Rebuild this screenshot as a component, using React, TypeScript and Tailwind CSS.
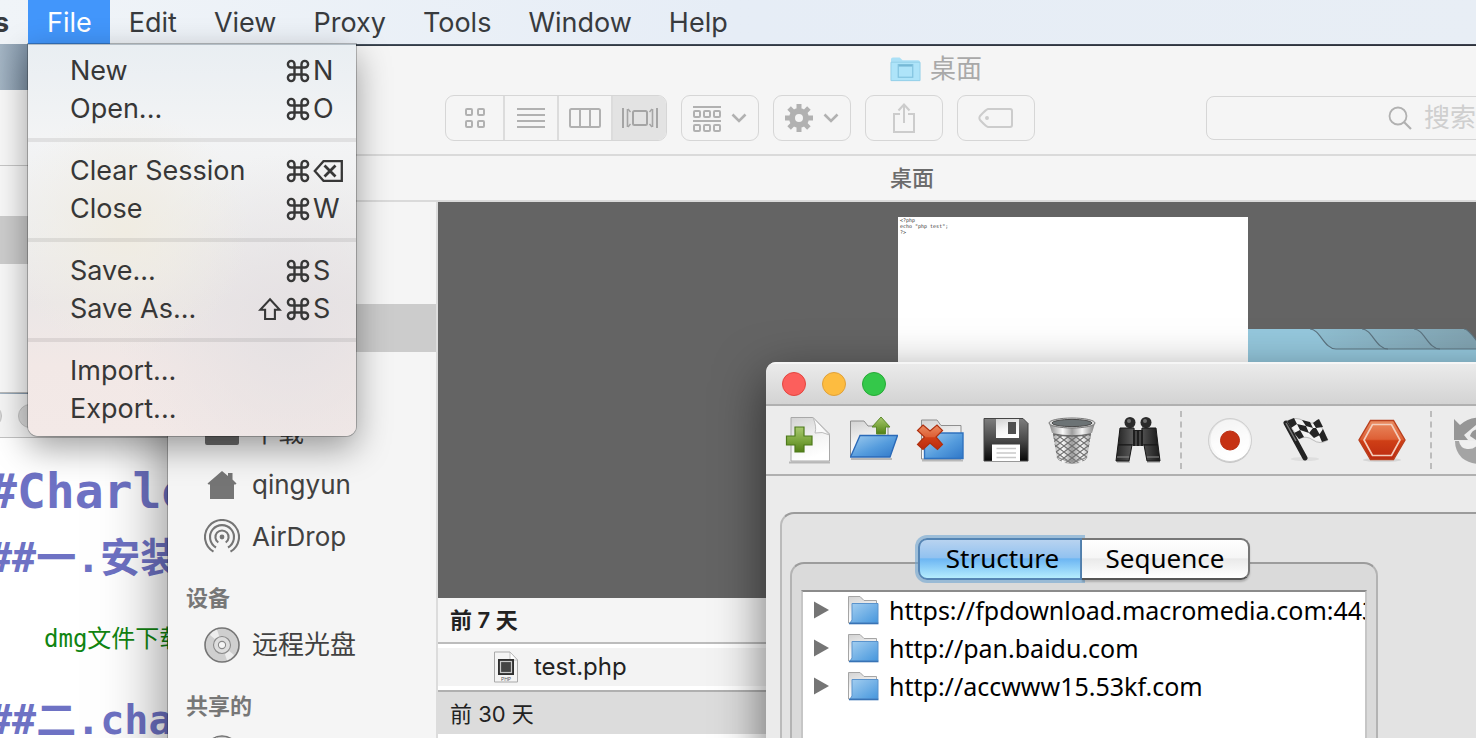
import type { ReactNode } from 'react';

type MenuEntry = { label: string; modifiers?: string; keyName?: string };

const menuTitles = ['File', 'Edit', 'View', 'Proxy', 'Tools', 'Window', 'Help'];

const menuGroups: MenuEntry[][] = [
  [
    { label: 'New', modifiers: '⌘', keyName: 'N' },
    { label: 'Open...', modifiers: '⌘', keyName: 'O' },
  ],
  [
    { label: 'Clear Session', modifiers: '⌘', keyName: '⌫' },
    { label: 'Close', modifiers: '⌘', keyName: 'W' },
  ],
  [
    { label: 'Save...', modifiers: '⌘', keyName: 'S' },
    { label: 'Save As...', modifiers: '⇧⌘', keyName: 'S' },
  ],
  [{ label: 'Import...' }, { label: 'Export...' }],
];

const hosts = [
  'https://fpdownload.macromedia.com:443',
  'http://pan.baidu.com',
  'http://accwww15.53kf.com',
];

/* ---------- menu bar ---------- */

function Glyph({ char }: { char: string }) {
  if (char === '⌘') {
    return (
      <svg role="img" aria-label="Command" className="h-6 w-6" viewBox="0 0 24 24" fill="none" stroke="currentColor" strokeWidth="2.4">
        <path d="M8.5 8.5V5.2A3.3 3.3 0 1 0 5.200 8.5H18.800A3.300 3.300 0 1 0 15.500 5.200V18.800A3.300 3.300 0 1 0 18.800 15.500H5.200A3.300 3.300 0 1 0 8.500 18.800Z" />
      </svg>
    );
  }
  if (char === '⇧') {
    return (
      <svg role="img" aria-label="Shift" className="h-6 w-6" viewBox="0 0 24 24" fill="none" stroke="currentColor" strokeWidth="2.1">
        <path d="M12 2.200L21.800 12.800H16.900V22H7.100V12.800H2.200Z" />
      </svg>
    );
  }
  if (char === '⌫') {
    return (
      <svg role="img" aria-label="Delete" className="h-6 w-[30px]" viewBox="0 0 30 24" fill="none" stroke="currentColor" strokeWidth="2.300">
        <path d="M10.500 2.200H28.800V21.800H10.500L1.800 12Z" />
        <path d="M11.500 6.500L22.500 17.500M22.500 6.500L11.500 17.500" strokeWidth="2.800" />
      </svg>
    );
  }
  return <span>{char}</span>;
}

function FileMenu() {
  return (
    <div
      role="menu"
      aria-label="File"
      className="absolute top-11 left-[28px] w-[328px] rounded-b-[10px] border-t border-t-[#b4bec6] bg-[radial-gradient(circle_at_30%_48%,#f0ece2_0%,transparent_40%),radial-gradient(circle_at_80%_72%,#e5e1e3_0%,transparent_45%),linear-gradient(to_bottom,#e9eef2_0%,#f3f4f5_24%,#eeeeee_50%,#ebe7e7_66%,#f2e8e6_82%,#f3e9e7_100%)] pt-[7px] pb-2 shadow-[0_0_0_1px_rgba(0,0,0,0.24),0_12px_34px_rgba(0,0,0,0.38)]"
    >
      {menuGroups.map((group, index) => (
        <div key={group[0].label} role="group">
          {index > 0 && <div role="separator" className="mt-[10px] mb-[10px] h-1 bg-black/8" />}
          {group.map((entry) => (
            <button
              key={entry.label}
              type="button"
              role="menuitem"
              className="flex h-[38px] w-full items-center pl-[42px] text-left text-[27px] leading-[38px] text-[#373737]"
            >
              <span className="flex-1">{entry.label}</span>
              <span className="flex items-center gap-1 pr-[3px]">
                {[...(entry.modifiers ?? '')].map((char) => (
                  <Glyph key={char} char={char} />
                ))}
              </span>
              <span className="flex w-[43px] items-center">{entry.keyName && <Glyph char={entry.keyName} />}</span>
            </button>
          ))}
        </div>
      ))}
    </div>
  );
}

function MenuBar() {
  return (
    <header className="absolute inset-x-0 top-0 z-30">
      <nav aria-label="Menu bar" className="flex h-11 items-stretch bg-linear-to-r from-[#f0f4f8] via-[#e6edf6] to-[#e8eef5] text-[27px] leading-[42px] text-[#383b3e]">
        <div className="flex w-[28px] shrink-0 justify-end overflow-hidden pt-0.5 pr-[19px] font-bold">s</div>
        {menuTitles.map((title) => (
          <button
            key={title}
            type="button"
            aria-haspopup="menu"
            className={title === 'File' ? 'bg-[#4296fb] pt-0.5 pr-[18px] pl-[19px] text-white' : 'pt-0.5 pr-[18px] pl-[19px]'}
          >
            {title}
          </button>
        ))}
      </nav>
      <FileMenu />
    </header>
  );
}

/* ---------- windows on the left ---------- */

function BackWindow() {
  return (
    <section aria-label="Background window" className="absolute top-[90px] left-0 h-[303px] w-[400px] border-b border-[#b8b8b8] bg-[#f8f8f8] pt-[75px]">
      <div className="h-[51px] border-t border-[#c6c6c6]" />
      <div className="h-12 bg-[#cdcdcd]" />
    </section>
  );
}

function Editor() {
  return (
    <section aria-label="Editor" className="absolute top-[394px] bottom-0 left-0 w-[400px] overflow-hidden bg-white font-['DejaVu_Sans_Mono','Noto_Sans_CJK_SC',monospace]">
      <div className="-ml-[22px] flex h-11 items-center gap-4 border-b border-[#c2c2c2] bg-[#f5f5f5]">
        <span className="h-6 w-6 rounded-full border border-[#c2c2c2] bg-[#d8d8d8]" />
        <span className="h-6 w-6 rounded-full border border-[#c2c2c2] bg-[#d8d8d8]" />
      </div>
      <div className="-ml-3 pt-4 whitespace-nowrap text-[#6e72c4]">
        <h1 className="text-[48px] leading-[74px] font-bold">#Charles</h1>
        <h2 className="text-[40px] leading-[60px] font-bold">##一.安装</h2>
        <p className="pt-[26px] pl-14 text-[24px] leading-[50px] text-[#118511]">dmg文件下载</p>
        <h2 className="pt-[26px] text-[40px] leading-[60px] font-bold">##二.charles</h2>
      </div>
    </section>
  );
}

/* ---------- Finder ---------- */

function ToolButton({ label, children, className }: { label: string; children: ReactNode; className?: string }) {
  return (
    <button
      type="button"
      aria-label={label}
      className="flex h-[46px] w-[78px] items-center justify-center rounded-[9px] border border-[#d6d6d6] text-[#b1b1b1]"
    >
      <span className={`flex items-center gap-2.5 ${className ?? ''}`}>{children}</span>
    </button>
  );
}

function Chevron() {
  return (
    <svg className="h-4 w-4" viewBox="0 0 16 16" fill="none" stroke="currentColor" strokeWidth="2.600">
      <path d="M1.500 4.500L8 11L14.500 4.500" />
    </svg>
  );
}

function ViewSwitch() {
  return (
    <div role="group" aria-label="View" className="flex h-[46px] overflow-hidden rounded-[9px] border border-[#d6d6d6] text-[#b1b1b1]">
      <button type="button" aria-label="Icons" className="flex w-[59px] items-center justify-center border-r-2 border-[#dcdcdc]">
        <svg className="h-6 w-6" viewBox="0 0 24 24" fill="none" stroke="currentColor" strokeWidth="2">
          <rect x="3" y="3" width="6" height="6" rx="1" />
          <rect x="15" y="3" width="6" height="6" rx="1" />
          <rect x="3" y="15" width="6" height="6" rx="1" />
          <rect x="15" y="15" width="6" height="6" rx="1" />
        </svg>
      </button>
      <button type="button" aria-label="List" className="flex w-[54px] items-center justify-center border-r-2 border-[#dcdcdc]">
        <svg className="h-6 w-7" viewBox="0 0 28 24" stroke="currentColor" strokeWidth="2">
          <path d="M0 3H28M0 9H28M0 15H28M0 21H28" />
        </svg>
      </button>
      <button type="button" aria-label="Columns" className="flex w-[54px] items-center justify-center border-r-2 border-[#dcdcdc]">
        <svg className="h-6 w-8" viewBox="0 0 32 24" fill="none" stroke="currentColor" strokeWidth="2">
          <rect x="1" y="3" width="30" height="18" rx="1.500" />
          <path d="M11 3V21M21 3V21" />
        </svg>
      </button>
      <button type="button" aria-label="Cover flow" aria-pressed="true" className="flex w-[53px] items-center justify-center bg-[#e3e3e3] text-[#a5a5a5]">
        <svg className="h-6 w-9" viewBox="0 0 36 24" fill="none" stroke="currentColor">
          <rect x="11" y="5" width="14" height="14" rx="1.500" strokeWidth="2" />
          <path d="M1 2V22M35 2V22" strokeWidth="2" />
          <path d="M5.500 3V21M30.500 3V21" strokeWidth="1.600" />
          <path d="M6 3L8.500 6M6 21L8.500 18M30 3L27.500 6M30 21L27.500 18" strokeWidth="1.400" />
        </svg>
      </button>
    </div>
  );
}

function FinderToolbar() {
  return (
    <div className="flex items-center gap-[14px] pr-6 pl-[277px]">
      <ViewSwitch />
      <ToolButton label="Arrange">
        <svg className="h-7 w-7" viewBox="0 0 28 28" fill="none" stroke="currentColor" strokeWidth="2">
          <path d="M0 3H28M0 17H28" />
          <rect x="1" y="7" width="6" height="6" rx="1" />
          <rect x="11" y="7" width="6" height="6" rx="1" />
          <rect x="21" y="7" width="6" height="6" rx="1" />
          <rect x="1" y="21" width="6" height="6" rx="1" />
          <rect x="11" y="21" width="6" height="6" rx="1" />
          <rect x="21" y="21" width="6" height="6" rx="1" />
        </svg>
        <Chevron />
      </ToolButton>
      <ToolButton label="Actions">
        <svg className="h-7 w-7" viewBox="0 0 28 28" fill="none" stroke="currentColor">
          <circle cx="14" cy="14" r="7" strokeWidth="6" />
          <path d="M14 0V6M14 22V28M0 14H6M22 14H28M4.100 4.100L8 8M20 20L23.900 23.900M23.900 4.100L20 8M4.100 23.900L8 20" strokeWidth="5" />
        </svg>
        <Chevron />
      </ToolButton>
      <ToolButton label="Share" className="opacity-60">
        <svg className="h-8 w-6" viewBox="0 0 24 32" fill="none" stroke="currentColor" strokeWidth="2">
          <path d="M8 12H2V30H22V12H16M12 21V3M6.500 8.500L12 2.500L17.500 8.500" />
        </svg>
      </ToolButton>
      <ToolButton label="Tags" className="opacity-60">
        <svg className="h-6 w-9" viewBox="0 0 36 24" fill="none" stroke="currentColor" strokeWidth="2">
          <path d="M10 3H32Q34 3 34 5V19Q34 21 32 21H10Q8 20.500 2 14Q0.800 12 2 10Q8 3.500 10 3Z" />
          <circle cx="9" cy="12" r="1.200" fill="currentColor" strokeWidth="1.500" />
        </svg>
      </ToolButton>
      <label className="ml-auto flex h-11 w-[474px] items-center gap-3 rounded-lg border border-[#d6d6d6] pl-[181px]">
        <svg className="h-6 w-6 shrink-0 text-[#b1b1b1]" viewBox="0 0 24 24" fill="none" stroke="currentColor" strokeWidth="1.800">
          <circle cx="10" cy="10" r="8.500" />
          <path d="M16 16L23 23" strokeWidth="2.200" />
        </svg>
        <input type="search" aria-label="搜索" placeholder="搜索" className="w-[120px] bg-transparent text-[26px] leading-[38px] outline-none placeholder:text-[#cfcfcf]" />
      </label>
    </div>
  );
}

function SidebarRow({ icon, children }: { icon: ReactNode; children: ReactNode }) {
  return (
    <a href="#" className="flex h-[52px] items-center gap-3 pl-9 text-[26px] leading-[52px] text-[#414141]">
      <span className="flex h-9 w-9 shrink-0 items-center justify-center">{icon}</span>
      <span>{children}</span>
    </a>
  );
}

function DiscIcon() {
  return (
    <svg className="h-9 w-9" viewBox="0 0 36 36" fill="none">
      <circle cx="18" cy="18" r="17" fill="#cfcfcf" stroke="#757575" strokeWidth="1.600" />
      <path d="M18 18L6 8Q9 4 13 2.500ZM18 18L30 28Q27 32 23 33.500Z" fill="#ededed" />
      <circle cx="18" cy="18" r="8.500" fill="#dedede" stroke="#8a8a8a" strokeWidth="1.100" />
      <circle cx="18" cy="18" r="3.600" fill="#f5f5f5" stroke="#8a8a8a" strokeWidth="1.100" />
    </svg>
  );
}

function SidebarHeading({ children }: { children: ReactNode }) {
  return <h3 className="h-14 pt-[14px] pl-[18px] text-[22px] leading-[42px] font-semibold text-[#777777]">{children}</h3>;
}

function FinderSidebar() {
  return (
    <aside className="w-[270px] shrink-0 overflow-hidden border-r-2 border-[#dcdcdc] bg-[#f5f5f5] pt-[102px]">
      <div className="mb-[55px] h-12 bg-[#cccccc]" />
      <SidebarRow
        icon={
          <svg className="h-7 w-9" viewBox="0 0 36 28" fill="#6b6b6b">
            <path d="M1 3Q1 1 3 1H12L15 4H33Q35 4 35 6V24Q35 26 33 26H3Q1 26 1 24Z" />
          </svg>
        }
      >
        下载
      </SidebarRow>
      <SidebarRow
        icon={
          <svg className="h-8 w-8" viewBox="0 0 32 32" fill="#757575">
            <path d="M16 2L22 7V4H26.500V10.500L30.500 14.500L29.500 15.500H28V30H4V15.500H2.500L1.500 14.500Z" />
          </svg>
        }
      >
        qingyun
      </SidebarRow>
      <SidebarRow
        icon={
          <svg className="h-9 w-9" viewBox="0 0 36 36" fill="none" stroke="#757575" strokeWidth="2.100">
            <circle cx="18" cy="18" r="2.400" fill="#757575" stroke="none" />
            <path d="M14.300 23.500A6.600 6.600 0 1 1 21.700 23.500" />
            <path d="M12 28.500A12 12 0 1 1 24 28.500" />
            <path d="M9.500 32.700A17 17 0 1 1 26.500 32.700" />
          </svg>
        }
      >
        AirDrop
      </SidebarRow>
      <SidebarHeading>设备</SidebarHeading>
      <SidebarRow icon={<DiscIcon />}>远程光盘</SidebarRow>
      <SidebarHeading>共享的</SidebarHeading>
      <div className="flex h-[52px] items-center pl-9">
        <DiscIcon />
      </div>
    </aside>
  );
}

function CoverFlow() {
  return (
    <div className="flex h-[396px] justify-center bg-[#646464] pt-[15px] pl-1">
      <div className="relative w-[350px] bg-white pl-[2px] font-['DejaVu_Sans_Mono',monospace] text-[5px] leading-[6px] text-[#333333]">
        <p>&lt;?php</p>
        <p>echo "php test";</p>
        <p>?&gt;</p>
        <svg className="absolute top-[111px] left-full h-[280px] w-[440px]" viewBox="0 0 440 280">
          <defs>
            <linearGradient id="tabs" x1="0" x2="1">
              <stop offset="0" stopColor="#96cbe0" />
              <stop offset="0.500" stopColor="#82a4b2" />
            </linearGradient>
          </defs>
          <path d="M0 1H216C222 1 228 14 236 21H440V280H0Z" fill="url(#tabs)" />
          <path d="M0 1H62C72 1 76 21 88 21H440V280H0Z" fill="#95c8dd" />
          <g fill="none" stroke="#5d7480" strokeWidth="1.200">
            <path d="M62 1C72 1 76 21 88 21H440" />
            <path d="M114 1C124 1 128 21 140 21" />
            <path d="M166 1C176 1 180 21 192 21" />
            <path d="M216 1C222 1 228 14 236 21" />
          </g>
        </svg>
      </div>
    </div>
  );
}

function Finder() {
  return (
    <section
      aria-label="Finder"
      className="absolute top-[46px] -right-[228px] -bottom-10 left-[168px] flex flex-col bg-[#f5f5f5] shadow-[0_0_0_1px_rgba(0,0,0,0.22),0_20px_60px_rgba(0,0,0,0.5)]"
    >
      <div className="border-b-2 border-[#dadada] pb-[13px]">
        <div className="flex h-[49px] items-center justify-center gap-[9px] pb-[3px] text-[26px] leading-[46px] text-[#a9a9a9]">
          <svg className="h-[26px] w-[31px]" viewBox="0 0 32 26">
            <path d="M1 3Q1 1 3 1H10L13 4H29Q31 4 31 6V25H1Z" fill="#abe0f6" />
            <path d="M1 6H31V25H1Z" fill="#aee4f9" stroke="#94cfe8" strokeWidth="1" />
            <rect x="8.500" y="8.500" width="15" height="13" fill="none" stroke="#80c2de" strokeWidth="1.200" />
            <path d="M9 9.500H23" stroke="#76b8d6" strokeWidth="2" />
          </svg>
          <h2>桌面</h2>
        </div>
        <FinderToolbar />
      </div>
      <div className="flex h-[46px] items-center justify-center border-b-2 border-[#dadada] pr-12 text-[22px] leading-[44px] font-medium text-[#6c6c6c]">桌面</div>
      <div className="flex min-h-0 flex-1">
        <FinderSidebar />
        <main className="min-w-0 flex-1 bg-white text-[#222222]">
          <CoverFlow />
          <h3 className="h-[46px] border-b-2 border-[#bcbcbc] bg-[#f5f5f5] pl-3 text-[22px] leading-[44px] font-semibold">前 7 天</h3>
          <div className="my-1 flex h-[38px] items-center gap-[15px] bg-[#f3f3f3] pl-[55px] text-[24px] leading-[38px]">
            <svg className="h-8 w-[26px]" viewBox="0 0 26 32">
              <path d="M1.500 1H17L24.500 9V31H1.500Z" fill="#f4f4f4" stroke="#a9a9a9" />
              <path d="M17 1V9H24.500Z" fill="#fff" stroke="#b5b5b5" strokeWidth="0.800" />
              <rect x="5" y="8" width="16" height="16" fill="#2f2f2f" />
              <rect x="7.500" y="10.500" width="11" height="11" fill="#444" stroke="#c9c9c9" strokeWidth="1.200" />
              <text x="13" y="29.500" textAnchor="middle" fontSize="5" fill="#555">PHP</text>
            </svg>
            <span>test.php</span>
          </div>
          <h3 className="h-11 border-t-2 border-[#b0b0b0] bg-[#dcdcdc] pl-3 text-[22px] leading-[44px]">前 30 天</h3>
        </main>
      </div>
    </section>
  );
}

/* ---------- Charles ---------- */

function IconButton({ label, children }: { label: string; children: ReactNode }) {
  return (
    <button type="button" aria-label={label} className="h-12 w-12 shrink-0">
      <svg className="h-12 w-12" viewBox="0 0 48 48">
        {children}
      </svg>
    </button>
  );
}

function Gradients() {
  return (
    <svg className="absolute h-0 w-0" aria-hidden="true">
      <defs>
        <linearGradient id="paper" x1="0" y1="0" x2="0.300" y2="1">
          <stop offset="0" stopColor="#d2d2d2" />
          <stop offset="0.600" stopColor="#f4f4f4" />
          <stop offset="1" stopColor="#ffffff" />
        </linearGradient>
        <linearGradient id="green" x1="0" y1="0" x2="0" y2="1">
          <stop offset="0" stopColor="#a8c870" />
          <stop offset="0.550" stopColor="#7aa53c" />
          <stop offset="1" stopColor="#527f16" />
        </linearGradient>
        <linearGradient id="blue" x1="0" y1="0" x2="1" y2="1">
          <stop offset="0" stopColor="#9fccef" />
          <stop offset="0.550" stopColor="#559cdd" />
          <stop offset="1" stopColor="#2f77c8" />
        </linearGradient>
        <linearGradient id="sky" x1="0" y1="0" x2="1" y2="1">
          <stop offset="0" stopColor="#a5cff0" />
          <stop offset="1" stopColor="#4596dd" />
        </linearGradient>
        <linearGradient id="red" x1="0" y1="0" x2="0" y2="1">
          <stop offset="0" stopColor="#ea8c62" />
          <stop offset="0.480" stopColor="#de6036" />
          <stop offset="0.520" stopColor="#cf3f16" />
          <stop offset="1" stopColor="#bb2a10" />
        </linearGradient>
        <linearGradient id="dark" x1="0" y1="0" x2="0" y2="1">
          <stop offset="0" stopColor="#7d7d7d" />
          <stop offset="0.500" stopColor="#4a4a4a" />
          <stop offset="1" stopColor="#080808" />
        </linearGradient>
        <linearGradient id="metal" x1="0" x2="1">
          <stop offset="0" stopColor="#858585" />
          <stop offset="0.300" stopColor="#fafafa" />
          <stop offset="0.500" stopColor="#9c9c9c" />
          <stop offset="0.720" stopColor="#f6f6f6" />
          <stop offset="1" stopColor="#7c7c7c" />
        </linearGradient>
        <linearGradient id="barrel" x1="0" x2="1">
          <stop offset="0" stopColor="#262626" />
          <stop offset="0.450" stopColor="#666666" />
          <stop offset="1" stopColor="#1b1b1b" />
        </linearGradient>
        <pattern id="mesh" width="8" height="6" patternUnits="userSpaceOnUse">
          <path d="M0 0L8 6M8 0L0 6" stroke="#707070" strokeWidth="1.100" />
        </pattern>
      </defs>
    </svg>
  );
}

function CharlesToolbar() {
  return (
    <div role="toolbar" aria-label="Charles" className="flex h-[70px] items-center gap-[18px] overflow-hidden border-b-2 border-[#b0b0b0] bg-[#ececec] pl-[18px]">
      <IconButton label="New session">
        <path d="M5 46.500H46" stroke="#b8b8b8" strokeWidth="2" />
        <path d="M7 1.500H29L45.500 18V45H7Z" fill="url(#paper)" stroke="#a8a8a8" />
        <path d="M29 1.500Q33 11 31 17Q38 15 45.500 19Z" fill="#fafafa" stroke="#bdbdbd" />
        <path d="M11 11H20V20H28V29H20V36H11V29H2.500V20H11Z" fill="url(#green)" stroke="#4d7a1b" strokeWidth="1.200" />
      </IconButton>
      <IconButton label="Open session">
        <path d="M1 43H42" stroke="#b8b8b8" strokeWidth="2" />
        <path d="M0.500 5H14L18 10H38V40H0.500Z" fill="url(#paper)" stroke="#8c8c8c" />
        <path d="M10 19.500H47.500L40 41H0.500Z" fill="url(#blue)" stroke="#2b6ab8" strokeWidth="1.400" />
        <path d="M31 1L40 11H35.500V18H26.500V11H22Z" fill="url(#green)" stroke="#5c8a2a" />
      </IconButton>
      <IconButton label="Close session">
        <path d="M6 44.500H47" stroke="#b8b8b8" strokeWidth="2" />
        <path d="M5.500 4H21L25 9.500H45V43H5.500Z" fill="url(#paper)" stroke="#8f8f8f" />
        <path d="M8.500 17H47V42.500H8.500Z" fill="url(#blue)" stroke="#2f72bf" strokeWidth="1.400" />
        <path d="M7 9L14 15L21 9L26.500 14.500L20 21L26.500 28.500L21.500 33.500L14 27L7 33.500L1.500 28.500L8.500 21L1.500 14.500Z" fill="url(#red)" stroke="#b0300f" strokeWidth="1.200" />
      </IconButton>
      <IconButton label="Save session">
        <path d="M2 2.500H41L46 7.500V45H2Z" fill="url(#dark)" stroke="#444" />
        <path d="M14 3H37V22H14Z" fill="url(#paper)" />
        <rect x="26" y="6" width="8" height="12" fill="#505050" />
        <path d="M10 28.500H38V45H10Z" fill="#fff" />
        <path d="M14.500 32.500H34M14.500 37H34M14.500 41.500H34" stroke="#c9c9c9" strokeWidth="1.400" />
      </IconButton>
      <IconButton label="Clear session">
        <path d="M1 7L4 17H5L9 42Q12 48 24 48T39 42L43 17H44L47 7Z" fill="url(#metal)" />
        <path d="M5 19L9 42Q12 47 24 47T39 42L43 19Z" fill="url(#mesh)" />
        <path d="M5 18Q24 22 43 18" fill="none" stroke="#6a6a6a" strokeWidth="1.400" />
        <ellipse cx="24" cy="7" rx="23" ry="5" fill="#dadada" stroke="#777" />
        <ellipse cx="24" cy="7" rx="20" ry="3.600" fill="#6c7375" stroke="#4a4a4a" />
        <path d="M9 41Q24 49 39 41" fill="none" stroke="#8a8a8a" strokeWidth="1.200" />
      </IconButton>
      <IconButton label="Find">
        <path d="M3 46H16M33 46H46" stroke="#bdbdbd" strokeWidth="2" />
        <circle cx="16" cy="6.500" r="5.500" fill="#2b2b2b" />
        <circle cx="32" cy="6.500" r="5.500" fill="#2b2b2b" />
        <circle cx="15" cy="5" r="2" fill="#6e6e6e" />
        <circle cx="31" cy="5" r="2" fill="#6e6e6e" />
        <path d="M6 12H20L21 29H4ZM28 12H42L44 29H27Z" fill="url(#barrel)" stroke="#171717" />
        <path d="M19 14H29V30H19Z" fill="#1e1e1e" />
        <path d="M22 15V30M26 15V30" stroke="#626262" strokeWidth="1.200" />
        <path d="M4 29H18L15 45H2ZM30 29H44L46 45H33Z" fill="url(#barrel)" stroke="#171717" />
        <path d="M3 41H15M33 41H45" stroke="#8b8b8b" strokeWidth="1.200" />
      </IconButton>
      <div className="h-[58px] border-l-2 border-dashed border-[#bcbcbc]" />
      <div className="ml-[6px] flex gap-7">
        <IconButton label="Record">
          <circle cx="24" cy="25.500" r="21.500" fill="#c6c6c6" />
          <circle cx="24" cy="24" r="21.500" fill="url(#paper)" stroke="#d0d0d0" />
          <circle cx="24" cy="23" r="19.500" fill="#fff" opacity="0.700" />
          <circle cx="24" cy="24.500" r="9.500" fill="#c63214" stroke="#b92d12" />
        </IconButton>
        <IconButton label="Throttle">
          <ellipse cx="23" cy="43" rx="14" ry="2" fill="#dedede" />
          <path d="M4 7L23 42" stroke="#232323" strokeWidth="5" strokeLinecap="round" />
          <path d="M4 7L14 25" stroke="#777" strokeWidth="1.500" />
          <path d="M5 5Q14 0 22 5T36 4L46 24Q38 29 31 24T17 23Z" fill="#f2f2f2" stroke="#999" strokeWidth="0.600" />
          <path d="M5 5L12 2L15 8L9 12ZM20 4L28 6L31 12L24 10ZM35 4L37 3L41 11L34 12L31 7ZM15 8L24 10L27 17L18 14ZM12 17L18 14L22 21L17 23ZM31 12L34 12L38 19L32 22L27 17ZM41 13L46 24L40 26L37 19Z" fill="#242424" />
        </IconButton>
        <IconButton label="Breakpoints">
          <ellipse cx="24" cy="44" rx="19" ry="2" fill="#d6d6d6" />
          <path d="M12.500 4.500H35.500L47 24L35.500 43.500H12.500L1 24Z" fill="url(#red)" stroke="#b9401f" strokeWidth="1.400" />
          <path d="M14.500 8.500H33.500L42 24L33.500 39.500H14.500L6 24Z" fill="none" stroke="#f3cdbc" strokeWidth="1.700" />
        </IconButton>
      </div>
      <div className="ml-[6px] h-[58px] border-l-2 border-dashed border-[#bcbcbc]" />
      <IconButton label="Repeat">
        <path d="M4 3L10 9Q20 0 34 2L48 6V24H26L20 20Q22 13 30 13L26 9L14 19L18 24H4Z" fill="#969696" />
        <path d="M5 25H48V46Q25 52 12 42Q5 35 5 25Z" fill="#a4a4a4" />
        <path d="M9 25H30Q26 34 17 33Q10 32 9 25Z" fill="#f0f0f0" />
      </IconButton>
    </div>
  );
}

function HostRow({ host }: { host: string }) {
  return (
    <li role="treeitem" aria-expanded="false" className="flex h-[38px] items-center pb-0.5 pl-[11px]">
      <svg className="h-[18px] w-4 shrink-0" viewBox="0 0 16 18" fill="#757575">
        <path d="M0 0.500L15 9L0 17.500Z" />
      </svg>
      <svg className="mr-[10px] ml-[18px] h-[30px] w-[31px] shrink-0" viewBox="0 0 31 30">
        <path d="M0.500 1.500H12L16 5.500H28.500V28H0.500Z" fill="url(#paper)" stroke="#a5a5a5" />
        <path d="M4 8.500H30V28H2L4 25Z" fill="url(#sky)" stroke="#5a93cc" />
        <path d="M1 28.500H30.500" stroke="#3873b5" strokeWidth="1.600" />
      </svg>
      <span>{host}</span>
    </li>
  );
}

function Charles() {
  return (
    <section
      aria-label="Charles"
      className="absolute top-[362px] -right-20 -bottom-10 left-[766px] flex flex-col overflow-hidden rounded-tl-[10px] bg-[#ebebeb] font-['Noto_Sans','Open_Sans',sans-serif]"
    >
      <Gradients />
      <div className="flex h-11 shrink-0 items-center gap-4 border-t-2 border-b-2 border-t-[#f6f6f6] border-b-[#b0b0b0] bg-linear-to-b from-[#ebebeb] to-[#d3d3d3] pl-4">
        <button type="button" aria-label="Close" className="h-6 w-6 rounded-full border border-[#e2463f] bg-[#fc5f5c]" />
        <button type="button" aria-label="Minimize" className="h-6 w-6 rounded-full border border-[#dfa03a] bg-[#fdbc40]" />
        <button type="button" aria-label="Zoom" className="h-6 w-6 rounded-full border border-[#27a936] bg-[#34c84a]" />
      </div>
      <CharlesToolbar />
      <div className="mt-9 ml-[14px] flex min-h-0 flex-1 flex-col rounded-tl-[14px] border-t-2 border-l-2 border-t-[#9b9b9b] border-l-[#bbbbbb] bg-[#e3e3e3] pt-[48px] pl-2">
        <div className="flex w-[588px] flex-1 flex-col rounded-t-[14px] border-2 border-x-[#b3b3b3] border-t-[#9c9c9c] bg-[#dadada] px-[9px]">
          <div role="tablist" className="-mt-[26px] mb-[10px] ml-[117px] flex h-[42px] w-[332px] shrink-0 text-[26px] leading-[36px] text-black">
            <button
              type="button"
              role="tab"
              aria-selected="true"
              className="w-[164px] rounded-l-[9px] border-2 border-[#5585b4] bg-[linear-gradient(to_bottom,#b8d3f0_0%,#92c2f0_46%,#6db6f3_50%,#b5edfe_100%)] pb-0.5 pl-[5px] shadow-[0_0_0_3px_rgba(110,165,210,0.6)]"
            >
              Structure
            </button>
            <button
              type="button"
              role="tab"
              aria-selected="false"
              className="flex-1 rounded-r-[9px] border-2 border-l-0 border-[#777777] border-b-[#555555] bg-[linear-gradient(to_bottom,#ffffff_0%,#f6f6f6_46%,#eaeaea_50%,#ffffff_100%)] pb-0.5 shadow-[0_2px_2px_rgba(0,0,0,0.2)]"
            >
              Sequence
            </button>
          </div>
          <ul role="tree" aria-label="Hosts" className="flex-1 overflow-hidden border-2 border-b-0 border-x-[#c6c6c6] border-t-[#8b8b8b] bg-white text-[25px] leading-[36px] whitespace-nowrap text-black">
            {hosts.map((host) => (
              <HostRow key={host} host={host} />
            ))}
          </ul>
        </div>
      </div>
    </section>
  );
}

export default function App() {
  return (
    <div className="relative h-screen overflow-hidden bg-[linear-gradient(to_right,#a3b4c3_0,#7f92a5_28px,#4e5b69_360px,#454a58_100%)] font-['Inter','Noto_Sans_CJK_SC',sans-serif]">
      <BackWindow />
      <Editor />
      <Finder />
      <div className="absolute top-[362px] -right-20 -bottom-10 left-[766px] rounded-tl-[10px] shadow-[0_16px_50px_rgba(0,0,0,0.55)]" />
      <Charles />
      <MenuBar />
    </div>
  );
}
